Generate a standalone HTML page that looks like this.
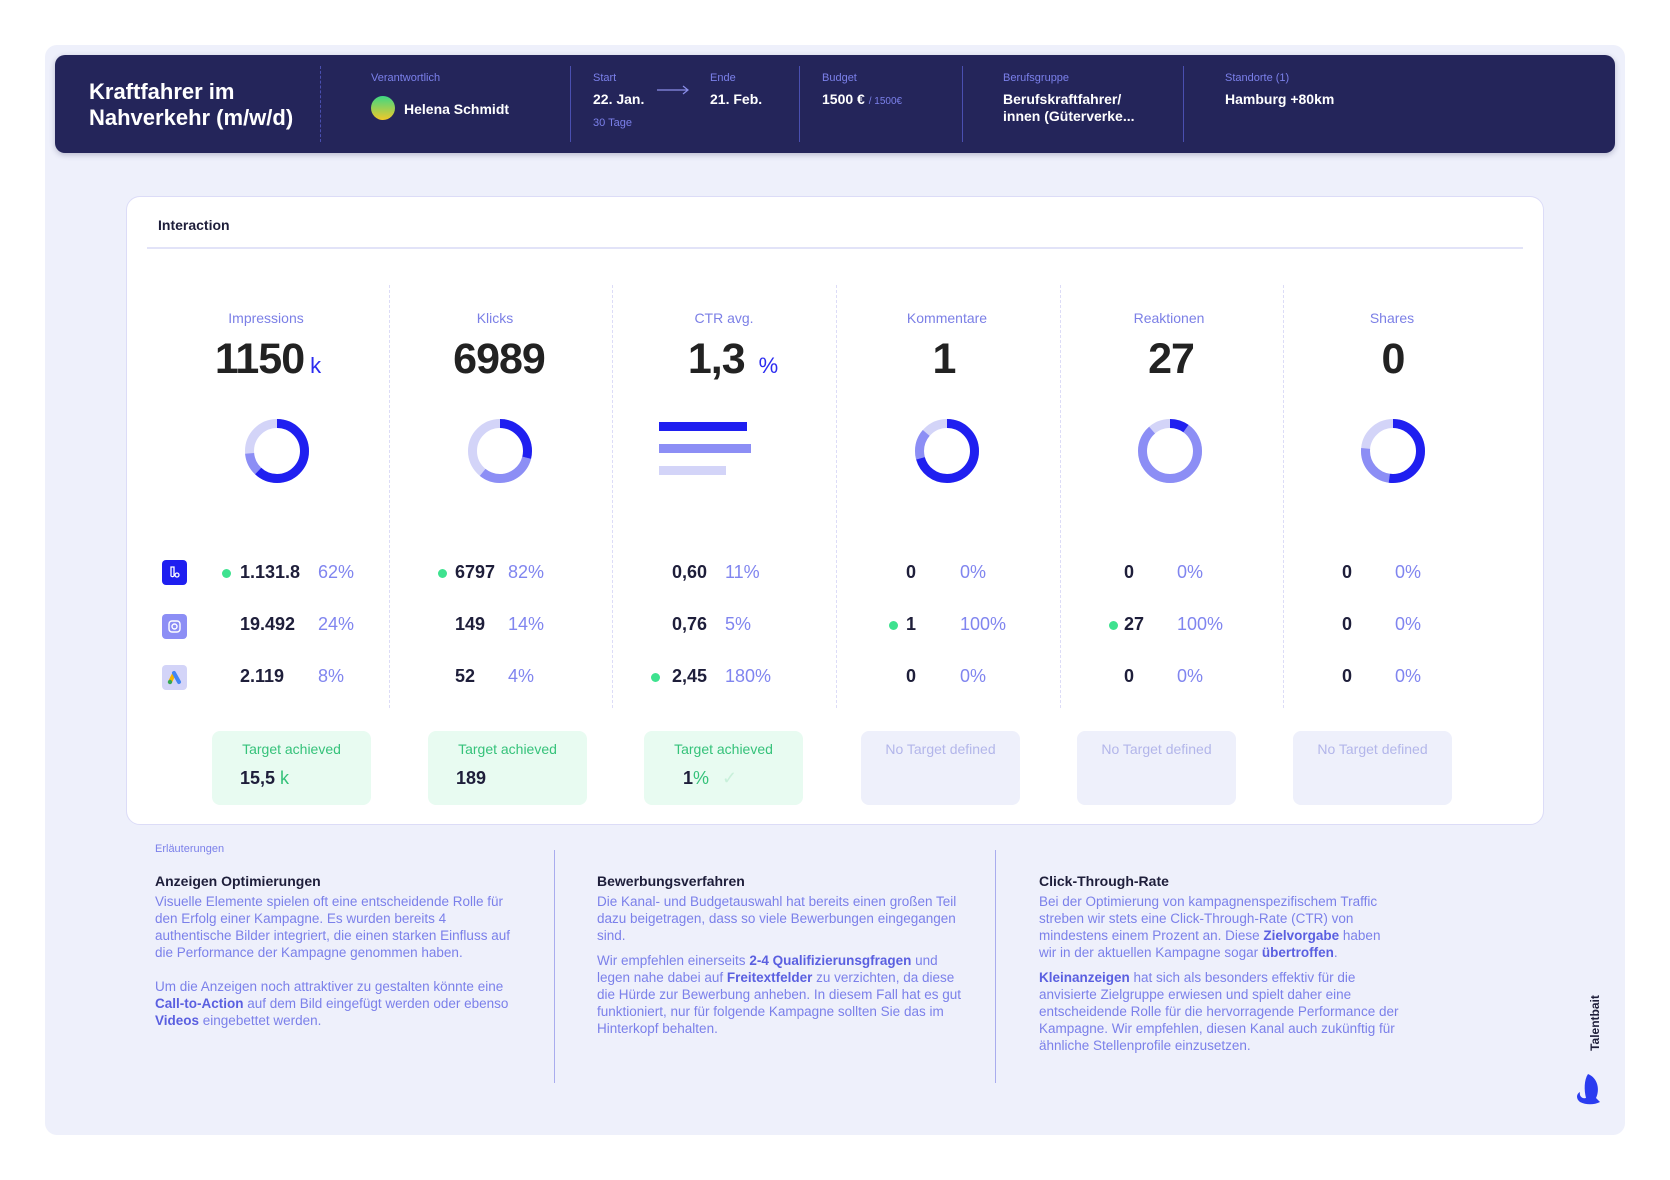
<!DOCTYPE html>
<html><head><meta charset="utf-8">
<style>
*{margin:0;padding:0;box-sizing:border-box}
body{width:1670px;height:1180px;background:#fff;font-family:"Liberation Sans",sans-serif;position:relative;overflow:hidden}
.a{position:absolute;white-space:nowrap}
.panel{position:absolute;left:45px;top:45px;width:1580px;height:1090px;background:#eef0fb;border-radius:12px}
.hdr{position:absolute;left:55px;top:55px;width:1560px;height:98px;background:#24255a;border-radius:10px;box-shadow:0 2px 6px rgba(30,30,80,.25)}
.hl{font-size:11px;color:#7b80ea}
.hv{font-size:14px;font-weight:bold;color:#fff}
.vs{position:absolute;top:66px;height:76px;width:0;border-left:1px solid #4a4fb0}
.card{position:absolute;left:126px;top:196px;width:1418px;height:629px;background:#fff;border:1.5px solid #dcdcf7;border-radius:14px}
.cs{position:absolute;top:285px;height:423px;border-left:1.5px dashed #dcdcf7}
.lab{font-size:14px;color:#7b7fe6;transform:translateX(-50%)}
.big{font-size:43px;font-weight:bold;color:#222;transform:translateX(-50%);letter-spacing:-1px}
.big small{font-size:22px;color:#2b2bf0;font-weight:normal;margin-left:6px;letter-spacing:0}
.v{font-size:18px;font-weight:bold;color:#1e1e3a}
.p{font-size:18px;color:#8085ef}
.dot{position:absolute;width:9px;height:9px;border-radius:50%;background:#3ee28f}
.tb{position:absolute;top:731px;width:159px;height:74px;border-radius:8px}
.ok{background:#e8fbf1}
.no{background:#eef0fb}
.tt{position:absolute;top:10px;left:0;width:100%;text-align:center;font-size:14px}
.ok .tt{color:#35c27a}.no .tt{color:#b3b6ea}
.tv{position:absolute;top:37px;font-size:18px;font-weight:bold;color:#1e1e3a}
.don{position:absolute;top:418px}
.ico{position:absolute;left:162px;width:25px;height:25px;border-radius:4px}
.txt{position:absolute;width:368px;font-size:13.5px;line-height:17px;color:#7b80ea}
.txt h4{font-size:14px;color:#1e1e3a;margin-bottom:3px}
.txt b{color:#5a5fe0}
.txt p{margin-bottom:8px}
</style></head><body>
<div class="panel"></div>
<div class="hdr"></div>
<div class="a" style="left:89px;top:79px;font-size:22px;font-weight:bold;color:#fff;line-height:26px">Kraftfahrer im<br>Nahverkehr (m/w/d)</div>
<div class="vs" style="left:320px;border-left:1px dashed #4a4fb0"></div>
<div class="a hl" style="left:371px;top:72px">Verantwortlich</div>
<div class="a" style="left:371px;top:96px;width:24px;height:24px;border-radius:50%;background:linear-gradient(#3ed884,#f0c929)"></div>
<div class="a hv" style="left:404px;top:101px">Helena Schmidt</div>
<div class="vs" style="left:570px"></div>
<div class="a hl" style="left:593px;top:72px">Start</div>
<div class="a hv" style="left:593px;top:91px">22. Jan.</div>
<div class="a hl" style="left:593px;top:117px">30 Tage</div>
<svg class="a" style="left:656px;top:84px" width="34" height="12"><path d="M1 6H32M27 2L32 6L27 10" stroke="#8a8ee8" stroke-width="1.2" fill="none"/></svg>
<div class="a hl" style="left:710px;top:72px">Ende</div>
<div class="a hv" style="left:710px;top:91px">21. Feb.</div>
<div class="vs" style="left:799px"></div>
<div class="a hl" style="left:822px;top:72px">Budget</div>
<div class="a hv" style="left:822px;top:91px">1500 € <span style="font-size:10px;color:#7b80ea;font-weight:normal">/ 1500€</span></div>
<div class="vs" style="left:962px"></div>
<div class="a hl" style="left:1003px;top:72px">Berufsgruppe</div>
<div class="a hv" style="left:1003px;top:91px;line-height:17px">Berufskraftfahrer/<br>innen (Güterverke...</div>
<div class="vs" style="left:1183px"></div>
<div class="a hl" style="left:1225px;top:72px">Standorte (1)</div>
<div class="a hv" style="left:1225px;top:91px">Hamburg +80km</div>

<div class="card"></div>
<div class="a" style="left:158px;top:217px;font-size:14px;font-weight:bold;color:#1e1e3a">Interaction</div>
<div class="a" style="left:147px;top:247px;width:1376px;height:2px;background:#e2e3f8"></div>
<div class="cs" style="left:389px"></div><div class="cs" style="left:612px"></div><div class="cs" style="left:836px"></div><div class="cs" style="left:1060px"></div><div class="cs" style="left:1283px"></div>

<div class="a lab" style="left:266px;top:310px">Impressions</div>
<div class="a lab" style="left:495px;top:310px">Klicks</div>
<div class="a lab" style="left:724px;top:310px">CTR avg.</div>
<div class="a lab" style="left:947px;top:310px">Kommentare</div>
<div class="a lab" style="left:1169px;top:310px">Reaktionen</div>
<div class="a lab" style="left:1392px;top:310px">Shares</div>

<div class="a big" style="left:268px;top:335px">1150<small>k</small></div>
<div class="a big" style="left:499px;top:335px">6989</div>
<div class="a big" style="left:733px;top:335px">1,3<small style="margin-left:14px">%</small></div>
<div class="a big" style="left:944px;top:335px">1</div>
<div class="a big" style="left:1171px;top:335px">27</div>
<div class="a big" style="left:1393px;top:335px">0</div>

<svg class="don" style="left:244px" width="66" height="66"><g transform="rotate(-90 33 33)" fill="none" stroke-width="9"><circle cx="33" cy="33" r="27.5" stroke="#d3d4f8"/><circle cx="33" cy="33" r="27.5" stroke="#8c8ef5" stroke-dasharray="0 107 20 200"/><circle cx="33" cy="33" r="27.5" stroke="#1f1ff0" stroke-dasharray="107 200"/></g></svg>
<svg class="don" style="left:467px" width="66" height="66"><g transform="rotate(-90 33 33)" fill="none" stroke-width="9"><circle cx="33" cy="33" r="27.5" stroke="#d3d4f8"/><circle cx="33" cy="33" r="27.5" stroke="#8c8ef5" stroke-dasharray="0 50 55 200"/><circle cx="33" cy="33" r="27.5" stroke="#1f1ff0" stroke-dasharray="50 200"/></g></svg>
<div class="a" style="left:659px;top:422px;width:88px;height:9px;background:#1f1ff0"></div>
<div class="a" style="left:659px;top:444px;width:92px;height:9px;background:#8c8ef5"></div>
<div class="a" style="left:659px;top:466px;width:67px;height:9px;background:#d3d4f8"></div>
<svg class="don" style="left:914px" width="66" height="66"><g transform="rotate(-90 33 33)" fill="none" stroke-width="9"><circle cx="33" cy="33" r="27.5" stroke="#d3d4f8"/><circle cx="33" cy="33" r="27.5" stroke="#8c8ef5" stroke-dasharray="0 122 27 200"/><circle cx="33" cy="33" r="27.5" stroke="#1f1ff0" stroke-dasharray="122 200"/></g></svg>
<svg class="don" style="left:1137px" width="66" height="66"><g transform="rotate(-90 33 33)" fill="none" stroke-width="9"><circle cx="33" cy="33" r="27.5" stroke="#d3d4f8"/><circle cx="33" cy="33" r="27.5" stroke="#8c8ef5" stroke-dasharray="0 17 136 200"/><circle cx="33" cy="33" r="27.5" stroke="#1f1ff0" stroke-dasharray="17 200"/></g></svg>
<svg class="don" style="left:1360px" width="66" height="66"><g transform="rotate(-90 33 33)" fill="none" stroke-width="9"><circle cx="33" cy="33" r="27.5" stroke="#d3d4f8"/><circle cx="33" cy="33" r="27.5" stroke="#8c8ef5" stroke-dasharray="0 90 42 200"/><circle cx="33" cy="33" r="27.5" stroke="#1f1ff0" stroke-dasharray="90 200"/></g></svg>

<div class="ico" style="top:560px;background:#1f1ff0"><svg width="25" height="25"><path d="M9 7h3v9a2 2 0 0 1-3 0z" stroke="#fff" fill="none" stroke-width="1.3"/><circle cx="15" cy="15" r="2" stroke="#fff" fill="none" stroke-width="1.3"/></svg></div>
<div class="ico" style="top:614px;background:#8c8ef5"><svg width="25" height="25"><rect x="7" y="7" width="11" height="11" rx="3" stroke="#fff" fill="none" stroke-width="1.4"/><circle cx="12.5" cy="12.5" r="2.5" stroke="#fff" fill="none" stroke-width="1.4"/></svg></div>
<div class="ico" style="top:665px;background:#d3d4f8"><svg width="25" height="25"><path d="M8 17L12 9" stroke="#f4b400" stroke-width="4" stroke-linecap="round"/><path d="M12 8L17 17" stroke="#4285f4" stroke-width="4" stroke-linecap="round"/><circle cx="8" cy="17" r="2.2" fill="#34a853"/></svg></div>

<div class="dot" style="left:222px;top:569px"></div>
<div class="a v" style="left:240px;top:562px">1.131.8</div><div class="a p" style="left:318px;top:562px">62%</div>
<div class="a v" style="left:240px;top:614px">19.492</div><div class="a p" style="left:318px;top:614px">24%</div>
<div class="a v" style="left:240px;top:666px">2.119</div><div class="a p" style="left:318px;top:666px">8%</div>

<div class="dot" style="left:438px;top:569px"></div>
<div class="a v" style="left:455px;top:562px">6797</div><div class="a p" style="left:508px;top:562px">82%</div>
<div class="a v" style="left:455px;top:614px">149</div><div class="a p" style="left:508px;top:614px">14%</div>
<div class="a v" style="left:455px;top:666px">52</div><div class="a p" style="left:508px;top:666px">4%</div>

<div class="a v" style="left:672px;top:562px">0,60</div><div class="a p" style="left:725px;top:562px">11%</div>
<div class="a v" style="left:672px;top:614px">0,76</div><div class="a p" style="left:725px;top:614px">5%</div>
<div class="dot" style="left:651px;top:673px"></div>
<div class="a v" style="left:672px;top:666px">2,45</div><div class="a p" style="left:725px;top:666px">180%</div>

<div class="a v" style="left:906px;top:562px">0</div><div class="a p" style="left:960px;top:562px">0%</div>
<div class="dot" style="left:889px;top:621px"></div>
<div class="a v" style="left:906px;top:614px">1</div><div class="a p" style="left:960px;top:614px">100%</div>
<div class="a v" style="left:906px;top:666px">0</div><div class="a p" style="left:960px;top:666px">0%</div>

<div class="a v" style="left:1124px;top:562px">0</div><div class="a p" style="left:1177px;top:562px">0%</div>
<div class="dot" style="left:1109px;top:621px"></div>
<div class="a v" style="left:1124px;top:614px">27</div><div class="a p" style="left:1177px;top:614px">100%</div>
<div class="a v" style="left:1124px;top:666px">0</div><div class="a p" style="left:1177px;top:666px">0%</div>

<div class="a v" style="left:1342px;top:562px">0</div><div class="a p" style="left:1395px;top:562px">0%</div>
<div class="a v" style="left:1342px;top:614px">0</div><div class="a p" style="left:1395px;top:614px">0%</div>
<div class="a v" style="left:1342px;top:666px">0</div><div class="a p" style="left:1395px;top:666px">0%</div>

<div class="tb ok" style="left:212px"><div class="tt">Target achieved</div><div class="tv" style="left:28px">15,5<span style="font-weight:normal;color:#35c27a"> k</span></div></div>
<div class="tb ok" style="left:428px"><div class="tt">Target achieved</div><div class="tv" style="left:28px">189</div></div>
<div class="tb ok" style="left:644px"><div class="tt">Target achieved</div><div class="tv" style="left:39px">1<span style="font-weight:normal;color:#35c27a">%</span> <span style="color:#c8f0da;font-weight:normal;margin-left:8px">✓</span></div></div>
<div class="tb no" style="left:861px"><div class="tt">No Target defined</div></div>
<div class="tb no" style="left:1077px"><div class="tt">No Target defined</div></div>
<div class="tb no" style="left:1293px"><div class="tt">No Target defined</div></div>

<div class="a" style="left:155px;top:843px;font-size:11px;color:#7b80ea">Erläuterungen</div>
<div class="a" style="left:554px;top:850px;width:1px;height:233px;background:#a9acee"></div>
<div class="a" style="left:995px;top:850px;width:1px;height:233px;background:#a9acee"></div>
<div class="txt" style="left:155px;top:873px"><h4>Anzeigen Optimierungen</h4><p style="margin-bottom:17px">Visuelle Elemente spielen oft eine entscheidende Rolle für den Erfolg einer Kampagne. Es wurden bereits 4 authentische Bilder integriert, die einen starken Einfluss auf die Performance der Kampagne genommen haben.</p><p>Um die Anzeigen noch attraktiver zu gestalten könnte eine <b>Call-to-Action</b> auf dem Bild eingefügt werden oder ebenso <b>Videos</b> eingebettet werden.</p></div>
<div class="txt" style="left:597px;top:873px"><h4>Bewerbungsverfahren</h4><p>Die Kanal- und Budgetauswahl hat bereits einen großen Teil dazu beigetragen, dass so viele Bewerbungen eingegangen sind.</p><p>Wir empfehlen einerseits <b>2-4 Qualifizierunsgfragen</b> und legen nahe dabei auf <b>Freitextfelder</b> zu verzichten, da diese die Hürde zur Bewerbung anheben. In diesem Fall hat es gut funktioniert, nur für folgende Kampagne sollten Sie das im Hinterkopf behalten.</p></div>
<div class="txt" style="left:1039px;top:873px;width:362px"><h4>Click-Through-Rate</h4><p>Bei der Optimierung von kampagnenspezifischem Traffic streben wir stets eine Click-Through-Rate (CTR) von mindestens einem Prozent an. Diese <b>Zielvorgabe</b> haben wir in der aktuellen Kampagne sogar <b>übertroffen</b>.</p><p><b>Kleinanzeigen</b> hat sich als besonders effektiv für die anvisierte Zielgruppe erwiesen und spielt daher eine entscheidende Rolle für die hervorragende Performance der Kampagne. Wir empfehlen, diesen Kanal auch zukünftig für ähnliche Stellenprofile einzusetzen.</p></div>
<div class="a" style="left:1560px;top:1016px;transform:rotate(-90deg);font-size:12px;font-weight:bold;color:#1e1e3a;width:70px;text-align:center">Talentbait</div>
<svg class="a" style="left:1574px;top:1072px" width="28" height="34"><path d="M14 2C24 6 26 18 22 26L26 30C20 33 12 33 6 30C2 27 2 22 6 20C5 24 8 27 12 26C10 18 10 8 14 2Z" fill="#2a3cf0"/></svg>
</body></html>
